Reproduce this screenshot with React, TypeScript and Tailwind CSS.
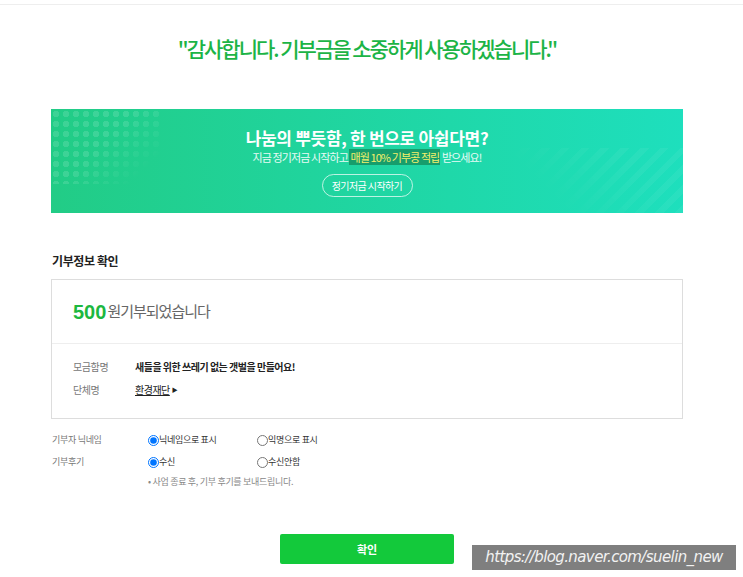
export default function App() {
  return (
    <div className="relative w-[743px] h-[577px] overflow-hidden bg-white font-['Noto_Sans_CJK_KR','Noto_Sans',sans-serif] text-[#222]">
      {/* top divider */}
      <div className="h-[4px]" />
      <div className="h-px bg-[#eeeeee]" />

      <div className="ml-[51px] w-[632px]">
        {/* thank-you title */}
        <h1 className="mt-[30px] text-center text-[21px] leading-[26px] tracking-[-2px] text-[#1cb446] font-medium">
          "감사합니다. 기부금을 소중하게 사용하겠습니다."
        </h1>

        {/* promo banner */}
        <div className="relative mt-[48px] h-[104px] overflow-hidden bg-gradient-to-r from-[#22cc86] to-[#1edfbd]">
          <div className="absolute left-0 top-0 w-[110px] h-[75px] bg-[radial-gradient(circle,rgba(255,255,255,0.13)_3px,transparent_3.5px)] bg-[length:10px_10px] [mask-image:linear-gradient(135deg,black_45%,transparent_85%)]" />
          <div className="absolute right-0 bottom-0 w-[170px] h-[65px] bg-[repeating-linear-gradient(-45deg,rgba(255,255,255,0.05)_0_6px,transparent_6px_14px)] [mask-image:linear-gradient(45deg,transparent_20%,black_70%)]" />
          <div className="relative flex flex-col items-center pt-[18px] text-white">
            <div className="text-[17px] leading-[22px] font-bold tracking-[-0.3px]">
              나눔의 뿌듯함, 한 번으로 아쉽다면?
            </div>
            <div className="text-[11px] leading-[16px] tracking-[-0.9px] text-white/90">
              지금 정기저금 시작하고{" "}
              <span className="bg-[#179d6c] px-px text-[#f4f06a]">매월 10% 기부콩 적립</span> 받으세요!
            </div>
            <button className="mt-[9px] flex h-[23px] w-[91px] items-center justify-center rounded-full border border-white/70 text-[10px] tracking-[-0.6px] text-white">
              정기저금 시작하기
            </button>
          </div>
        </div>

        {/* donation info */}
        <h2 className="mt-[40px] pl-px text-[12px] leading-[16px] font-bold tracking-[-0.4px] text-[#222]">
          기부정보 확인
        </h2>
        <div className="mt-[10px] border border-[#dddddd]">
          <div className="flex h-[64px] items-center border-b border-[#eeeeee] px-[21px]">
            <span className="font-['Liberation_Sans',sans-serif] text-[20px] font-bold text-[#1db83f]">500</span>
            <span className="ml-px text-[15px] tracking-[-1px] text-[#666]">원기부되었습니다</span>
          </div>
          <div className="flex h-[74px] flex-col gap-[7px] px-[21px] pt-[15px] text-[10px] leading-[16px]">
            <div className="flex">
              <span className="w-[62px] text-[#777] tracking-[-0.4px]">모금함명</span>
              <span className="font-bold tracking-[-0.5px] text-[#222]">새들을 위한 쓰레기 없는 갯벌을 만들어요!</span>
            </div>
            <div className="flex items-center">
              <span className="w-[62px] text-[#777] tracking-[-0.4px]">단체명</span>
              <span className="underline tracking-[-0.5px] text-[#222]">환경재단</span>
              <span className="ml-[2px] text-[6px] text-[#222]">▶</span>
            </div>
          </div>
        </div>

        {/* options */}
        <div className="mt-[14px] pl-px text-[9px] leading-[14px] tracking-[-0.3px]">
          <div className="flex items-center">
            <span className="w-[96px] text-[#777]">기부자 닉네임</span>
            <label className="flex w-[109px] items-center text-[#333]">
              <input type="radio" name="nick" defaultChecked className="m-0 h-[11px] w-[11px]" />
              닉네임으로 표시
            </label>
            <label className="flex items-center text-[#333]">
              <input type="radio" name="nick" className="m-0 h-[11px] w-[11px]" />
              익명으로 표시
            </label>
          </div>
          <div className="mt-[8px] flex items-center">
            <span className="w-[96px] text-[#777]">기부후기</span>
            <label className="flex w-[109px] items-center text-[#333]">
              <input type="radio" name="review" defaultChecked className="m-0 h-[11px] w-[11px]" />
              수신
            </label>
            <label className="flex items-center text-[#333]">
              <input type="radio" name="review" className="m-0 h-[11px] w-[11px]" />
              수신안함
            </label>
          </div>
          <div className="mt-[6px] pl-[96px] text-[#888]">• 사업 종료 후, 기부 후기를 보내드립니다.</div>
        </div>

        <button className="mx-auto mt-[45px] flex h-[30px] w-[174px] items-center justify-center rounded-[2px] bg-[#13c93b] text-[11px] font-bold text-white">
          확인
        </button>
      </div>

      {/* blog watermark */}
      <div className="absolute left-[472px] top-[545px] flex h-[25px] w-[264px] items-center justify-center bg-[#7f7f7f] font-['DejaVu_Sans',sans-serif] text-[15px] italic font-light tracking-[-0.6px] text-[#f2f2f2]">
        https://blog.naver.com/suelin_new
      </div>
    </div>
  );
}
